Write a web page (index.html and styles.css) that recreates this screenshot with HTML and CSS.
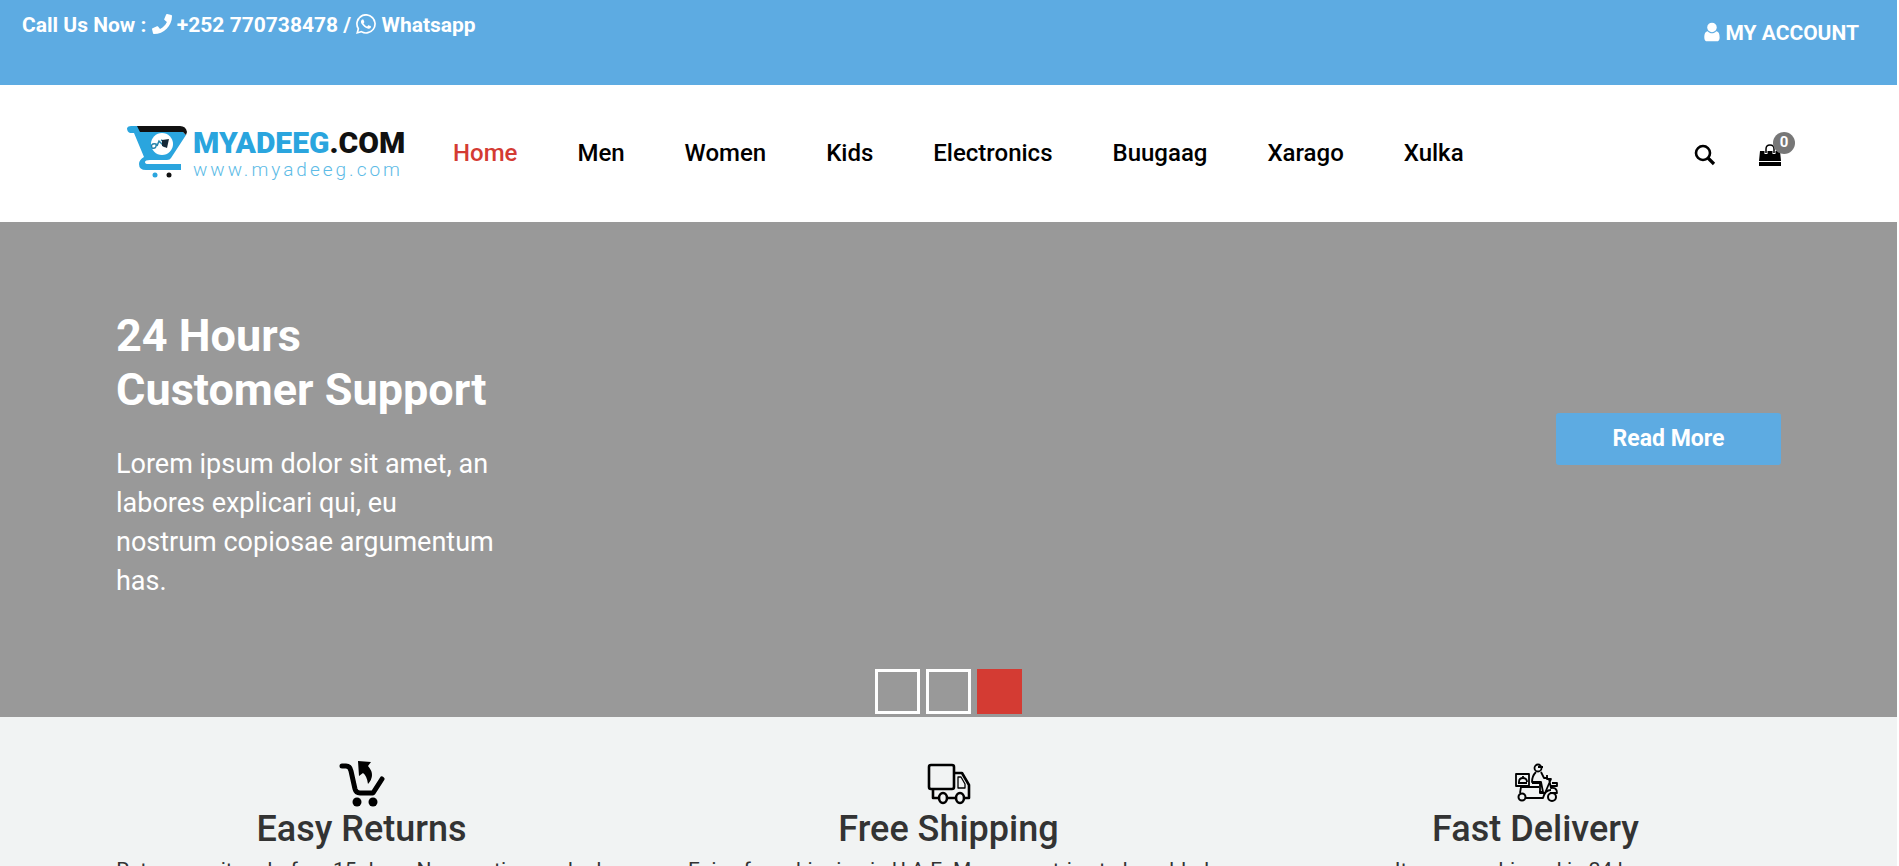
FILE: index.html
```html
<!DOCTYPE html>
<html lang="en">
<head>
  <meta charset="UTF-8" />
  <meta name="viewport" content="width=device-width, initial-scale=1" />
  <title>Myadeeg.com</title>
  <link rel="stylesheet" href="styles.css">
</head>
<body>
  <div class="topbar">
    <p class="contact">Call Us Now :
      <a href="tel:+252770738478"><svg class="icon" viewBox="0 0 512 512"><path d="M493 25L389 1c-11-3-23 3-27 14l-48 112c-4 10-1 21 7 28l61 50c-36 76-98 140-177 177l-50-61c-7-8-18-11-28-7L15 362c-11 4-17 16-14 27l24 104c3 11 12 19 24 19 256 0 463-207 463-463 0-12-8-22-19-24z"/></svg> +252 770738478</a> /
      <a href="#whatsapp"><svg class="icon" viewBox="0 0 512 512"><path d="M436 75A253 253 0 0 0 37 380L2 510l133-35A253 253 0 0 0 436 75zM256 465c-38 0-75-10-107-29l-8-5-79 21 21-77-5-8a210 210 0 1 1 178 98zm115-157c-6-3-37-18-43-20s-10-3-14 3-16 20-20 25-7 5-14 2c-37-19-61-33-86-75-7-11 6-10 18-35 2-4 1-8-1-11s-14-34-19-47-10-11-14-11h-12c-4 0-11 2-17 8s-22 22-22 53 23 61 26 65 45 68 108 96c40 17 56 19 76 16 12-2 37-15 42-30s5-27 4-30-6-6-12-9z"/></svg> Whatsapp</a>
    </p>
    <a class="account" href="#account"><svg class="icon" viewBox="0 0 408 512"><circle cx="204" cy="140" r="122"/><path d="M96 238C26 246 8 320 8 400c0 62 30 94 78 94h236c48 0 78-32 78-94 0-80-18-154-88-162-32 34-66 52-108 52s-76-18-108-52z"/></svg> MY ACCOUNT</a>
  </div>

  <header class="header">
    <a class="logo" href="#home" aria-label="Myadeeg.com">
      <svg class="logo-mark" viewBox="0 0 61 52">
        <path d="M0 2Q1 0 4 0h7l3 6h42l3 3-15 23q-1 2-4 2H23q-5 0-5 2t3 2h33v6H19q-7 0-7-6 0-4 5-7L7 7H3Q0 6 0 2z" fill="#2aa5de"/>
        <path d="M10 0h43q6 0 7 6l-1 3-3-3H13z" fill="#111"/>
        <circle cx="35" cy="18" r="11" fill="#fff"/>
        <path d="M25 22q-2-5 4-4 1 5-4 4m5-2 2-5 5 5 1-4-4-2" fill="none" stroke="#2583aa" stroke-width="1.5"/>
        <path d="M35 14l7-1-2 9-5-2z" fill="#142938"/>
        <circle cx="28" cy="49" r="2.5" fill="#2aa5de"/>
        <circle cx="42" cy="49" r="2.5" fill="#111"/>
      </svg>
      <span class="logo-text">
        <span class="logo-name">MYADEEG<span class="logo-com">.COM</span></span>
        <span class="logo-url">www.myadeeg.com</span>
      </span>
    </a>

    <nav class="nav">
      <a class="active" href="#home">Home</a>
      <a href="#men">Men</a>
      <a href="#women">Women</a>
      <a href="#kids">Kids</a>
      <a href="#electronics">Electronics</a>
      <a href="#buugaag">Buugaag</a>
      <a href="#xarago">Xarago</a>
      <a href="#xulka">Xulka</a>
    </nav>

    <div class="tools">
      <button class="tool" type="button" aria-label="Search">
        <svg viewBox="0 0 22 22"><circle cx="9" cy="9" r="7" fill="none" stroke="#000" stroke-width="2.6"/><path d="M14 14l6 6" stroke="#000" stroke-width="3.2"/></svg>
      </button>
      <button class="tool cart" type="button" aria-label="Cart">
        <svg viewBox="0 0 22 22"><path d="M1 7h20l1 10H0zM0 18h22v4H0z"/><path d="M7 10V6q0-4 4-4t4 4v4" fill="none" stroke="#fff" stroke-width="3"/><path d="M7 9V5q0-4 4-4t4 4v4" fill="none" stroke="#000" stroke-width="1.5"/></svg>
        <span class="badge">0</span>
      </button>
    </div>
  </header>

  <section class="hero">
    <div class="hero-body">
      <div class="hero-text">
        <h1>24 Hours<br>Customer Support</h1>
        <p>Lorem ipsum dolor sit amet, an labores explicari qui, eu nostrum copiosae argumentum has.</p>
      </div>
      <a class="read-more" href="#more">Read More</a>
    </div>
    <div class="dots">
      <button type="button" aria-label="Slide 1"></button>
      <button type="button" aria-label="Slide 2"></button>
      <button class="current" type="button" aria-label="Slide 3"></button>
    </div>
  </section>

  <section class="services">
    <div class="service">
      <svg viewBox="0 0 46 46"><path d="M3 5h4q4 0 5 5l4 18q1 4 5 4h13l9-14" fill="none" stroke="#000" stroke-width="5" stroke-linecap="round" stroke-linejoin="round"/><circle cx="18" cy="41" r="4.5"/><circle cx="34" cy="41" r="4.5"/><path d="M19 0l13 1-3 4q8 9 0 18-1-8-5-11l-4 3z"/></svg>
      <h2>Easy Returns</h2>
      <p>Return any item before 15 days. No questions asked.</p>
    </div>
    <div class="service">
      <svg viewBox="0 0 46 46" fill="none" stroke="#000" stroke-width="2.6" stroke-linejoin="round"><rect x="3" y="4" width="25" height="24" rx="2"/><path d="M28 12h8l7 12v13h-5M7 28v9h5m9 0h9"/><path d="M32 16h3l4 7v4h-7z" stroke-width="1.3"/><ellipse cx="17" cy="37" rx="4" ry="5"/><ellipse cx="34" cy="37" rx="4" ry="5"/></svg>
      <h2>Free Shipping</h2>
      <p>Enjoy free shipping in U.A.E. More countries to be added</p>
    </div>
    <div class="service">
      <svg viewBox="0 0 46 46" fill="none" stroke="#000" stroke-width="1.8" stroke-linejoin="round"><path d="M3 13h13v12H3z"/><path d="M5 22h9M6 21q0-4 4-4t4 4M10 16v-1"/><circle cx="25" cy="7" r="3.5"/><path d="M25 6h5M23 11q-4 4-4 10h9l2 10h-4M28 11l3 6h4M19 22h8v10h5l6-14h-4v-4M36 18l2 9q6-1 6 5h-7M38 25h6v-3h-5M7 26h19M8 26l-1 6M13 37h17q2-8 8-8"/><circle cx="9" cy="36" r="3.5" stroke-width="2"/><circle cx="39" cy="36" r="4" stroke-width="2"/></svg>
      <h2>Fast Delivery</h2>
      <p>Items are shipped in 24 hours.</p>
    </div>
  </section>
</body>
</html>
```
FILE: styles.css
```css
* {
  box-sizing: border-box;
}
html {
  overflow: hidden;
}
body {
  margin: 0 2px 0 0;
  font-family: Roboto, Arial, sans-serif;
  color: #333;
  background: #fff;
}
a {
  color: inherit;
  text-decoration: none;
}
button {
  padding: 0;
  border: none;
  background: none;
  cursor: pointer;
}
h1, h2, p {
  margin: 0;
}

.topbar {
  display: flex;
  justify-content: space-between;
  height: 85px;
  padding: 12px 38px 0 22px;
  background: #5dabe2;
  color: #fff;
  font-size: 21px;
  font-weight: bold;
  line-height: 26px;
}
.account {
  margin-top: 8px;
}
.icon {
  height: 20px;
  fill: currentColor;
  vertical-align: -2px;
}

.header {
  display: flex;
  align-items: center;
  height: 137px;
  padding: 0 100px 2px 127px;
}
.logo {
  display: flex;
  gap: 5px;
}
.logo-mark {
  width: 61px;
  height: 52px;
}
.logo-text {
  display: flex;
  flex-direction: column;
  width: 221px;
  color: #2aa5de;
}
.logo-name {
  font-size: 30px;
  font-weight: 900;
  line-height: 34px;
}
.logo-com {
  color: #111;
}
.logo-url {
  color: #5dbbe6;
  font-size: 19px;
  font-weight: 300;
  line-height: 20px;
  letter-spacing: 3px;
}
.nav {
  display: flex;
  gap: 60px;
  margin-left: 39px;
  color: #000;
  font-size: 24px;
  font-weight: 500;
}
.nav .active {
  color: #d43b33;
}
.tools {
  display: flex;
  gap: 43px;
  margin-left: auto;
  padding: 4px 16px 0 0;
}
.tool {
  position: relative;
  height: 22px;
}
.tool svg {
  display: block;
  width: 22px;
  height: 22px;
}
.badge {
  position: absolute;
  top: -12px;
  left: 14px;
  width: 22px;
  height: 22px;
  border-radius: 50%;
  background: #777;
  color: #fff;
  font: bold 15px/20px Roboto, sans-serif;
}

.hero {
  display: flex;
  flex-direction: column;
  background: #999;
  color: #fff;
}
.hero-body {
  display: flex;
  justify-content: space-between;
  padding: 87px 116px 68px;
}
.hero-text {
  width: 382px;
}
.hero-text h1 {
  margin-bottom: 28px;
  font-size: 45px;
  line-height: 54px;
}
.hero-text p {
  font-size: 27px;
  line-height: 39px;
}
.read-more {
  align-self: flex-start;
  width: 225px;
  margin-top: 104px;
  border-radius: 3px;
  background: #5dabe2;
  font-size: 23px;
  font-weight: bold;
  line-height: 52px;
  text-align: center;
}
.dots {
  display: flex;
  justify-content: center;
  gap: 6px;
  padding-bottom: 3px;
}
.dots button {
  width: 45px;
  height: 45px;
  border: 3px solid #fff;
}
.dots .current {
  border-color: #d43b33;
  background: #d43b33;
}

.services {
  display: grid;
  grid-template-columns: repeat(3, 1fr);
  padding: 44px 68px 40px;
  background: #f1f3f3;
  text-align: center;
}
.service svg {
  display: block;
  width: 46px;
  height: 46px;
  margin: 0 auto;
}
.service h2 {
  margin-bottom: 4px;
  font-size: 36px;
  font-weight: 500;
  line-height: 44px;
}
.service p {
  font-size: 21px;
  line-height: 30px;
}
```
